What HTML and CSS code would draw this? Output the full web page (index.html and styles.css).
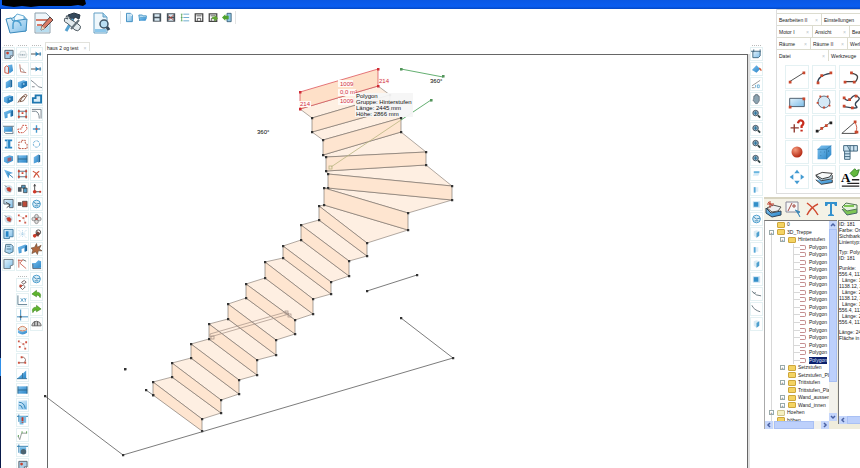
FILE: index.html
```html
<!DOCTYPE html>
<html lang="de">
<head>
<meta charset="utf-8">
<title>haus 2 og test</title>
<link rel="stylesheet" href="styles.css">
</head>
<body>
<svg class="defs" aria-hidden="true">
<defs>
<linearGradient id="g" x1="0" y1="0" x2="1" y2="1"><stop offset="0" stop-color="#7cc0ee"/><stop offset="1" stop-color="#2a86c8"/></linearGradient>
<linearGradient id="gl" x1="0" y1="0" x2="1" y2="1"><stop offset="0" stop-color="#e4f3fc"/><stop offset="1" stop-color="#7dbde8"/></linearGradient>
<radialGradient id="gr" cx=".35" cy=".3" r=".7"><stop offset="0" stop-color="#f59a7c"/><stop offset="1" stop-color="#b52a14"/></radialGradient>
<symbol id="plan" viewBox="0 0 12 12"><path d="M2 2h9v6l-3 3H2z" fill="#a9cde6" stroke="#56616c"/><path d="M8 11V8h3" fill="#fff" stroke="#56616c"/><circle cx="5" cy="5" r="1.5" fill="#c8402c"/></symbol>
<symbol id="door" viewBox="0 0 12 12"><path d="M5 2l5-1 1 7-4 3z" fill="url(#g)"/><path d="M2 10V4q2-3 4 0v7z" fill="#e8f2f8" stroke="#c8503c"/></symbol>
<symbol id="wall" viewBox="0 0 12 12"><path d="M3 4l5-3v8l-5 2z" fill="url(#g)"/><path d="M8 1l2 1v7l-2 1z" fill="#1d699f"/></symbol>
<symbol id="block" viewBox="0 0 12 12"><path d="M1 4l6-2 4 1v5l-6 3-4-2z" fill="url(#g)"/><path d="M5 5v6l6-3V3z" fill="#2478b4"/><path d="M6 6l2-1v2z" fill="#d4ecfa"/></symbol>
<symbol id="blockr" viewBox="0 0 12 12"><path d="M1 4l6-2 4 1v5l-6 3-4-2z" fill="url(#g)"/><path d="M5 5l4-1v4l-4 1z" fill="#9c5f71"/></symbol>
<symbol id="arch" viewBox="0 0 12 12"><path d="M1 4l8-3 2 1v6l-3 1V5L5 6v4l-3 1z" fill="url(#g)"/><path d="M9 3l2-1v6l-2 1z" fill="#1d699f"/></symbol>
<symbol id="slab" viewBox="0 0 12 12"><path d="M1 3h9v6H1z" fill="url(#g)"/><path d="M0 3h12M10 3l1 8H3L1 9" fill="none" stroke="#667b8b"/></symbol>
<symbol id="beam" viewBox="0 0 12 12"><path d="M2 1h8v2H8v6h2v2H2V9h2V3H2z" fill="#2884c4"/><path d="M5 2v8" stroke="#a5d7f4"/></symbol>
<symbol id="ptr" viewBox="0 0 12 12"><path d="M1 1l10 4-4 1-1 5-2-4z" fill="url(#g)"/><path d="M5 5l6 5" stroke="#357ba7"/></symbol>
<symbol id="hit" viewBox="0 0 12 12"><circle cx="6" cy="6" r="4.5" fill="#d3e3ee"/><path d="M2 2l2 2" stroke="#567"/><path d="M4 5l3-1 2 2-1 3-3-1z" fill="#cf3a29" stroke="#9a5550" stroke-width=".6"/></symbol>
<symbol id="corner" viewBox="0 0 12 12"><path d="M1 1h10v9H7V6H1z" fill="url(#gl)" stroke="#58636b"/><path d="M3 4l5 3-4 3" fill="none" stroke="#444"/></symbol>
<symbol id="layer" viewBox="0 0 12 12"><path d="M1 1h10v8H7v2H1z" fill="url(#gl)" stroke="#3e79a0"/><path d="M3 3h3v6H3z" fill="#2584c6"/></symbol>
<symbol id="frameb" viewBox="0 0 12 12"><path d="M2 3h8v5L8 10H2z" fill="url(#gl)" stroke="#3f6780"/><path d="M0 3h3M3 1v3M10 1v3" stroke="#3f6780"/></symbol>
<symbol id="copy" viewBox="0 0 12 12"><path d="M3 1h6l2 2v6l-4 2-5-2z" fill="url(#gl)" stroke="#487289"/><path d="M4 3h4M4 6h5" stroke="#487289"/></symbol>
<symbol id="shape" viewBox="0 0 12 12"><path d="M1 1h10v6L8 8v3H1z" fill="url(#gl)" stroke="#66747e"/></symbol>
<symbol id="tag" viewBox="0 0 12 12"><path d="M1 6h2l1-3h5l1 3h1l-1 4H2z" fill="#f4f7f8" stroke="#bcc9ce" stroke-width=".6"/><path d="M3 7h1M5 7h2M8 7h1" stroke="#8196a3" stroke-width="1.5"/></symbol>
<symbol id="angle" viewBox="0 0 12 12"><path d="M3 1l1 8 6 1" fill="none" stroke="#ba7163"/><path d="M3 5q4 0 5 5" fill="none" stroke="#a5a5a5"/></symbol>
<symbol id="clip" viewBox="0 0 12 12"><path d="M1 10l3-5 5-4 2 1-4 6-4 1 3-5 3-1" fill="none" stroke="#76523f"/></symbol>
<symbol id="frame" viewBox="0 0 12 12"><path d="M2 1v10M10 1v10M1 3h10M1 9h10" fill="none" stroke="#536b7b"/><path d="M1 2h2v2H1zM9 2h2v2H9zM1 8h2v2H1zM9 8h2v2H9zM5 4h2v2H5z" fill="#d24632"/></symbol>
<symbol id="loop" viewBox="0 0 12 12"><path d="M2 10L1 6l4 0 1-4h4l1 4-4 4z" fill="none" stroke="#c5412e" stroke-dasharray="2 1"/></symbol>
<symbol id="contour" viewBox="0 0 12 12"><path d="M2 11V4h3V2h4v3l2 1v5z" fill="none" stroke="#b3442f" stroke-dasharray="2 1"/></symbol>
<symbol id="grid" viewBox="0 0 12 12"><path d="M1 2h10v8H1z" fill="url(#g)"/><path d="M1 2v8M11 2v8M1 6h10" stroke="#296385"/></symbol>
<symbol id="film" viewBox="0 0 12 12"><path d="M1 4h4v5H1z" fill="#505b65"/><path d="M5 2h4v3H5zM7 5h4v5H7z" fill="#559dc7" stroke="#333" stroke-width=".7"/></symbol>
<symbol id="filmr" viewBox="0 0 12 12"><path d="M1 4h4v4H1z" fill="#555"/><path d="M6 3h5v6H6z" fill="#bc4a38" stroke="#333" stroke-width=".7"/></symbol>
<symbol id="dots" viewBox="0 0 12 12"><path d="M1 1h2v2H1zM9 2h2v2H9zM2 7h2v2H2zM6 4h2v2H6zM8 9h2v2H8z" fill="#cf5240"/><path d="M2 2l5 3 2 5" fill="none" stroke="#c3b0ac" stroke-width=".5"/></symbol>
<symbol id="pale" viewBox="0 0 12 12"><path d="M2 2l8 8M10 2L2 10M2 6h8M6 2v8" stroke="#a9cfe6" stroke-dasharray="1 1"/></symbol>
<symbol id="fan" viewBox="0 0 12 12"><path d="M1 2h5L3 5l7 6M2 1v9" fill="none" stroke="#cc6555"/><path d="M6 1l4 2" stroke="#666"/></symbol>
<symbol id="knot" viewBox="0 0 12 12"><path d="M5 3l3-2 2 2-3 2zM3 8l4-2 2 2-3 3z" fill="none" stroke="#6c5c5d"/><circle cx="4" cy="7" r="1.5" fill="#c44939"/></symbol>
<symbol id="xy" viewBox="0 0 12 12"><path d="M1 1v10h10" fill="none" stroke="#58788b"/><path d="M4 4l3 4M7 4L4 8M8 4l1 2 1-2M9 6v2" stroke="#3c8fbf" fill="none" stroke-width=".8"/></symbol>
<symbol id="axis" viewBox="0 0 12 12"><path d="M4 0v12M0 8h12" stroke="#2b82bb"/><path d="M3 7h2v2H3z" fill="#555"/></symbol>
<symbol id="bowl" viewBox="0 0 12 12"><path d="M1 6q5 3 10 0v3q-5 4-10 0z" fill="url(#g)"/><path d="M1 5q5-6 10 0-5 4-10 0" fill="#e9ebe8" stroke="#d07a54"/></symbol>
<symbol id="hook" viewBox="0 0 12 12"><path d="M2 9h6q3-4-1-6H5" fill="none" stroke="#8b6760"/><path d="M1 8h2v2H1zM4 2h2v2H4zM8 8h2v2H8z" fill="#d05340"/></symbol>
<symbol id="ramp" viewBox="0 0 12 12"><path d="M0 10L10 1v9z" fill="url(#g)"/><path d="M6 4v6M0 10h11" stroke="#35739b"/></symbol>
<symbol id="bowls" viewBox="0 0 12 12"><path d="M1 1h10v10H1z" fill="url(#gl)"/><path d="M2 3q6 0 7 7M2 6q3 0 4 4" fill="none" stroke="#287fb5"/></symbol>
<symbol id="mark" viewBox="0 0 12 12"><path d="M0 2h12M2 0v8" stroke="#277aad"/><path d="M2 2h8v7H7v2H3z" fill="#7abde4"/><path d="M6 3v4M6 8v1" stroke="#c53426" stroke-width="2"/></symbol>
<symbol id="step" viewBox="0 0 12 12"><path d="M1 7l2 4 2-7h6" fill="none" stroke="#8c9491"/><path d="M1 7h1M5 3h1M10 3h1" stroke="#57a050" stroke-width="2"/></symbol>
<symbol id="round" viewBox="0 0 12 12"><path d="M0 2h12M2 0v9" stroke="#277aad"/><path d="M3 3h7v7H3z" fill="#69b5e4"/><circle cx="7" cy="8" r="3" fill="#4d6471"/></symbol>
<symbol id="len" viewBox="0 0 12 12"><path d="M0 6h11" stroke="#444"/><path d="M5 4l3 2-3 2M10 4v4" fill="#2d83ba" stroke="#2d83ba"/></symbol>
<symbol id="curve" viewBox="0 0 12 12"><path d="M0 2l4 3 4 4 4 1M1 9h3" fill="none" stroke="#5a6570" stroke-width=".8"/></symbol>
<symbol id="room" viewBox="0 0 12 12"><path d="M2 10V5h3V2h6v8z" fill="#d7edf9" stroke="#1d77b0" stroke-width="2"/></symbol>
<symbol id="arc" viewBox="0 0 12 12"><path d="M1 3h4q4 1 4 8M1 1h10v10" fill="none" stroke="#6e7c85"/></symbol>
<symbol id="move" viewBox="0 0 12 12"><path d="M6 2v8M2 6h8" stroke="#459bce" stroke-width="1.5"/><path d="M5 5h2v2H5z" fill="#d14d3e"/></symbol>
<symbol id="circ" viewBox="0 0 12 12"><circle cx="6" cy="6" r="3.5" fill="none" stroke="#68acd4" stroke-dasharray="3 1"/></symbol>
<symbol id="cross" viewBox="0 0 12 12"><path d="M2 3q5 2 7 7M9 3Q5 5 3 10" fill="none" stroke="#ce5038" stroke-width="1.2"/></symbol>
<symbol id="orig" viewBox="0 0 12 12"><path d="M4 1v8h7M4 1L3 3M4 1l1 2" fill="none" stroke="#444"/><circle cx="4" cy="9" r="2" fill="#cf3a2a"/><path d="M9 8h2v2H9z" fill="#cf3a2a"/></symbol>
<symbol id="dial" viewBox="0 0 12 12"><circle cx="6" cy="6" r="4.2" fill="#d9edf8" stroke="#439aca"/><path d="M3 4l3 2 4-1M4 8h4" fill="none" stroke="#3e88b4"/></symbol>
<symbol id="flower" viewBox="0 0 12 12"><circle cx="6" cy="3" r="2" fill="#ddd" stroke="#777" stroke-width=".8"/><circle cx="3" cy="6" r="2" fill="#ddd" stroke="#777" stroke-width=".8"/><circle cx="9" cy="6" r="2" fill="#ddd" stroke="#777" stroke-width=".8"/><circle cx="6" cy="9" r="2" fill="#ddd" stroke="#777" stroke-width=".8"/><circle cx="6" cy="6" r="1.2" fill="#c64838"/></symbol>
<symbol id="fox" viewBox="0 0 12 12"><path d="M4 7l3-4 3 2-2 4z" fill="#7e4138"/><circle cx="8" cy="4" r="2.5" fill="none" stroke="#444"/><circle cx="4" cy="8" r="2" fill="#cc3b29"/></symbol>
<symbol id="star" viewBox="0 0 12 12"><path d="M6 0l1 4 4-2-2 4 3 2-4 0-1 4-2-3-4 2 1-4-2-2 4-1z" fill="#ae673e" stroke="#58402c" stroke-width=".6"/></symbol>
<symbol id="terr" viewBox="0 0 12 12"><path d="M1 5l4 0 3-3 3 1v7L2 11z" fill="url(#g)"/><path d="M2 6v5h9" stroke="#567" fill="none"/></symbol>
<symbol id="undo" viewBox="0 0 12 12"><path d="M1 6l5-4v2q6 0 4 6-1-3-4-3v2z" fill="#5eb52d" stroke="#39831d" stroke-width=".6"/></symbol>
<symbol id="redo" viewBox="0 0 12 12"><path d="M11 6L6 2v2Q0 4 2 10q1-3 4-3v2z" fill="#5eb52d" stroke="#39831d" stroke-width=".6"/></symbol>
<symbol id="car" viewBox="0 0 12 12"><path d="M1 7q1-4 5-4t5 4v1H1z" fill="#ccc" stroke="#666"/><path d="M4 3v5M7 3v5" stroke="#555"/></symbol>
<symbol id="zoomi" viewBox="0 0 12 12"><circle cx="5" cy="5" r="3" fill="#98b3c3" stroke="#44525f"/><path d="M7.500 7.500L10 10" stroke="#344" stroke-width="2"/><path d="M3 5h4M5 3v4" stroke="#23719d"/></symbol>
<symbol id="hand" viewBox="0 0 12 12"><path d="M3 6V3h1V2h1V1h2v1h1v1h1v5l-2 3H5L2 7z" fill="#8aa3b1" stroke="#4b5a65" stroke-width=".7"/></symbol>
<symbol id="fill" viewBox="0 0 12 12"><path d="M1 7l5-5 4 4-4 4z" fill="url(#g)"/><path d="M9 5q2 1 2 3" stroke="#d15a34" fill="none" stroke-width="1.5"/></symbol>
<symbol id="meas" viewBox="0 0 12 12"><path d="M1 8L10 2M1 10h3" stroke="#777" stroke-width=".8"/><path d="M5 7v3M7 7h2v3H7z" fill="none" stroke="#4b9dca" stroke-width=".8"/></symbol>
<symbol id="view" viewBox="0 0 12 12"><path d="M4 3h6L8 8H2z" fill="#d3eaf7"/><path d="M3 3h6v2H3z" fill="#69b5de"/></symbol>
<symbol id="viewl" viewBox="0 0 12 12"><path d="M3 4h5v5H3z" fill="#ddeef8"/><path d="M3 4h2v6H3z" fill="#58a9d8"/></symbol>
<symbol id="viewf" viewBox="0 0 12 12"><path d="M2 3h8v7H2z" fill="#c5e2f3"/><path d="M3 4h5v5H3z" fill="#338fc8"/></symbol>
<symbol id="viewc" viewBox="0 0 12 12"><path d="M3 3l3-1 3 1v5l-3 2-3-2z" fill="#d9ebf4"/><path d="M6 5l3-2v5l-3 2z" fill="#4d9fcd"/></symbol>
<symbol id="wave" viewBox="0 0 12 12"><path d="M1 3l5 4 5 1M3 6l2-2" stroke="#65747c" fill="none"/></symbol>
<symbol id="path" viewBox="0 0 12 12"><path d="M1 2q2 5 9 7" stroke="#65747c" fill="none"/></symbol>
<symbol id="page" viewBox="0 0 12 12"><path d="M3 1h5l2 2v8H3z" fill="url(#gl)" stroke="#2f83b9"/><path d="M8 1v3h2" fill="#fff"/></symbol>
<symbol id="open" viewBox="0 0 12 12"><path d="M1 3h4l1 1h4v2H3l-1 4z" fill="#b5dcf3" stroke="#398dbf"/><path d="M3 6h8l-2 4H2z" fill="url(#g)"/></symbol>
<symbol id="disk" viewBox="0 0 12 12"><path d="M1 1h10v10H1z" fill="#47525b"/><path d="M3 2h6v3H3zM3 7h6v3H3z" fill="#d8e9f3"/></symbol>
<symbol id="diskr" viewBox="0 0 12 12"><use href="#disk"/><path d="M3 4l6 5M9 3L3 9" stroke="#ba4031"/></symbol>
<symbol id="list" viewBox="0 0 12 12"><path d="M4 2h7M4 6h7M4 10h7" stroke="#559ec6"/><path d="M1 2h2M1 6h2M1 10h2M2 2v8" stroke="#59a559"/></symbol>
<symbol id="diskw" viewBox="0 0 12 12"><path d="M1.500 1.500h9v9h-9z" fill="#fff" stroke="#444" stroke-width="1.5"/><path d="M3 4h6M4 10V7h4v3" fill="none" stroke="#444"/></symbol>
<symbol id="diskg" viewBox="0 0 12 12"><use href="#diskw"/><path d="M5 5h3V3l4 4-4 4V8H5z" fill="#61a634"/></symbol>
<symbol id="exit" viewBox="0 0 12 12"><path d="M6 1h5v10H6z" fill="#8ec5e2" stroke="#355a73"/><path d="M0 6l4-4v2h4v4H4v2z" fill="#4ea22d"/></symbol>
</defs>
</svg>

<header class="titlebar"><svg class="scribble" viewBox="0 0 86 7" aria-hidden="true"><path d="M2 0h83l1 4-3 2-5-1-7 1H39l-8 1-9-1-8 1-8-1-4-1z"/></svg></header>

<div class="window">
<main class="main">
<nav class="topbar" aria-label="Standard">
<div class="big">
<button aria-label="Öffnen"><svg viewBox="0 0 24 24"><path d="M2 8l6-1 2-2 10 1 1 14H5z" fill="#d4ecfa" stroke="#4c96c2"/><path d="M9 7l3-4 7 2v10l-8 1z" fill="#f3fbff" stroke="#6cafd6"/><path d="M1 8l5-1 2 3 14-2-1 12-16 2z" fill="url(#gl)" stroke="#3b8abc"/><path d="M8 18v-4q0-5 4-4t4 5" fill="none" stroke="#4c9fd0" stroke-width="1.500"/></svg></button>
<button aria-label="Bearbeiten"><svg viewBox="0 0 24 24"><path d="M2 2h11l4 4v16H2z" fill="#eef6fa" stroke="#8ba0ad"/><path d="M3 15h13v6H3z" fill="#b9ddef"/><path d="M3 9h13M4 14h5" stroke="#d77b69" stroke-width="2"/><path d="M8 19l1-4L17 6l3 3-9 9z" fill="#d87b65" stroke="#554344"/><path d="M8 19l1-4 3 3z" fill="#e9d6bd"/></svg></button>
<button aria-label="Werkzeug"><svg viewBox="0 0 24 24"><path d="M7 4l6-2 6 2-1 4-4-2-2 3-2-2-3 1z" fill="#34485b" stroke="#273542"/><path d="M12 8L5 20" stroke="#57a2d0" stroke-width="3"/><path d="M4 7q-2 4 2 5l8 7q3 2 5-1t-2-5L9 8Q8 4 5 5l2 3z" fill="#e4ebee" stroke="#4c5860"/><path d="M18 9l-8 9" stroke="#65727a" stroke-width="2"/></svg></button>
<button aria-label="Vorschau"><svg viewBox="0 0 24 24"><path d="M5 2h9l4 4v16H5z" fill="#eef7fc" stroke="#639fc4"/><path d="M6 18h11v3H6z" fill="#8cc7eb"/><path d="M14 2v4h4" fill="#a9d6ef" stroke="#639fc4"/><circle cx="15" cy="13" r="4" fill="#b9def3" stroke="#3f5668" stroke-width="1.500"/><path d="M18 16l2 3" stroke="#34485b" stroke-width="3"/></svg></button>
</div>
<div class="small">
<button aria-label="Neu"><svg><use href="#page"/></svg></button><button aria-label="Laden"><svg><use href="#open"/></svg></button><button aria-label="Speichern"><svg><use href="#disk"/></svg></button><button aria-label="Verwerfen"><svg><use href="#diskr"/></svg></button><button aria-label="Liste"><svg><use href="#list"/></svg></button><button aria-label="Speichern unter"><svg><use href="#diskw"/></svg></button><button aria-label="Export"><svg><use href="#diskg"/></svg></button><button aria-label="Beenden"><svg><use href="#exit"/></svg></button>
</div>
</nav>

<div class="work">
<div class="tools" role="toolbar" aria-label="Bauteile">
<div class="col grip">
<button aria-label="Plan"><svg><use href="#plan"/></svg></button><button aria-label="Tür"><svg><use href="#door"/></svg></button><button aria-label="Wand"><svg><use href="#wall"/></svg></button><button aria-label="Block"><svg><use href="#block"/></svg></button><button aria-label="Bogen"><svg><use href="#arch"/></svg></button><button aria-label="Decke"><svg><use href="#slab"/></svg></button><button aria-label="Träger"><svg><use href="#beam"/></svg></button><button aria-label="Aussparung"><svg><use href="#blockr"/></svg></button><button aria-label="Auswahl"><svg><use href="#ptr"/></svg></button><button aria-label="Treffer"><svg><use href="#hit"/></svg></button><button aria-label="Ecke"><svg><use href="#corner"/></svg></button><button aria-label="Punkt"><svg><use href="#hit"/></svg></button><button aria-label="Ebene"><svg><use href="#layer"/></svg></button><button aria-label="Kopie"><svg><use href="#copy"/></svg></button><button aria-label="Form"><svg><use href="#shape"/></svg></button>
</div>
<div class="col grip">
<button aria-label="Etikett"><svg><use href="#tag"/></svg></button><button aria-label="Winkel"><svg><use href="#angle"/></svg></button><button aria-label="Körper"><svg><use href="#block"/></svg></button><button aria-label="Stift"><svg><use href="#clip"/></svg></button><button aria-label="Rahmen"><svg><use href="#frame"/></svg></button><button aria-label="Schleife"><svg><use href="#loop"/></svg></button><button aria-label="Kontur"><svg><use href="#contour"/></svg></button><button aria-label="Fläche"><svg><use href="#grid"/></svg></button><button aria-label="Raster"><svg><use href="#frame"/></svg></button><button aria-label="Gruppe"><svg><use href="#film"/></svg></button><button aria-label="Gruppe lösen"><svg><use href="#filmr"/></svg></button><button aria-label="Punkte"><svg><use href="#dots"/></svg></button><button aria-label="Netz"><svg><use href="#pale"/></svg></button><button aria-label="Dach"><svg><use href="#arch"/></svg></button><button aria-label="Fächer"><svg><use href="#fan"/></svg></button>
<div class="col grip">
<button aria-label="Knoten"><svg><use href="#knot"/></svg></button><button aria-label="Koordinaten"><svg><use href="#xy"/></svg></button><button aria-label="Achse"><svg><use href="#axis"/></svg></button><button aria-label="Schale"><svg><use href="#bowl"/></svg></button><button aria-label="Punktfolge"><svg><use href="#dots"/></svg></button><button aria-label="Haken"><svg><use href="#hook"/></svg></button><button aria-label="Rampe"><svg><use href="#ramp"/></svg></button><button aria-label="Breite"><svg><use href="#grid"/></svg></button><button aria-label="Radius"><svg><use href="#bowls"/></svg></button><button aria-label="Marke"><svg><use href="#mark"/></svg></button><button aria-label="Stufe"><svg><use href="#step"/></svg></button><button aria-label="Rund"><svg><use href="#round"/></svg></button><button aria-label="Blatt"><svg><use href="#plan"/></svg></button>
</div>
</div>
<div class="col grip">
<button aria-label="Verlängern"><svg><use href="#len"/></svg></button><button aria-label="Kürzen"><svg><use href="#len"/></svg></button><button aria-label="Kurve"><svg><use href="#curve"/></svg></button><button aria-label="Raum"><svg><use href="#room"/></svg></button><button aria-label="Abrunden"><svg><use href="#arc"/></svg></button><button aria-label="Verschieben"><svg><use href="#move"/></svg></button><button aria-label="Drehen"><svg><use href="#circ"/></svg></button><button aria-label="Quader"><svg><use href="#wall"/></svg></button><button aria-label="Löschen"><svg><use href="#cross"/></svg></button><button aria-label="Ursprung"><svg><use href="#orig"/></svg></button><button aria-label="Skala"><svg><use href="#dial"/></svg></button><button aria-label="Muster"><svg><use href="#flower"/></svg></button><button aria-label="Material"><svg><use href="#fox"/></svg></button><button aria-label="Explosion"><svg><use href="#star"/></svg></button><button aria-label="Gelände"><svg><use href="#terr"/></svg></button><button aria-label="Kompass"><svg><use href="#dial"/></svg></button><button aria-label="Rückgängig"><svg><use href="#undo"/></svg></button><button aria-label="Wiederholen"><svg><use href="#redo"/></svg></button><button aria-label="Objekt"><svg><use href="#car"/></svg></button>
</div>
</div>

<section class="doc">
<div class="doctab"><span>haus 2 og test</span><i>×</i></div>
<div class="canvas">
<svg class="drawing" viewBox="48 55 698 413" role="img" aria-label="Treppe">
<defs>
<marker id="k" markerWidth="3" markerHeight="3" refX="1.500" refY="1.500" markerUnits="userSpaceOnUse"><rect x=".25" y=".25" width="2.500" height="2.500" fill="#333"/></marker>
<marker id="r" markerWidth="3" markerHeight="3" refX="1.500" refY="1.500" markerUnits="userSpaceOnUse"><rect width="3" height="3" fill="#d02c34"/></marker>
<marker id="gn" markerWidth="3" markerHeight="3" refX="1.500" refY="1.500" markerUnits="userSpaceOnUse"><rect x=".5" y=".5" width="2" height="2" fill="#9c9" stroke="#3c8346"/></marker>
</defs>
<g class="tread">
<path d="M300 109L378 86L390 95L312 118Z"/><path d="M312 132L390 110L401 118L323 140Z"/><path d="M323 155L401 132L426 152L326 157Z"/><path d="M326 171L426 165L452 186L328 174Z"/><path d="M328 188L452 200L408 213L324 188Z"/><path d="M324 205L408 230L367 243L319 206Z"/>
<path d="M319 220L367 256L349 261L301 225Z"/><path d="M301 240L349 276L331 282L283 246Z"/><path d="M283 258L331 294L313 299L265 262Z"/><path d="M265 278L313 314L295 320L246 284Z"/><path d="M246 298L295 334L276 340L228 304Z"/><path d="M228 319L276 355L257 360L209 324Z"/><path d="M209 339L257 375L239 380L191 344Z"/><path d="M191 358L239 394L221 400L172 363Z"/><path d="M172 377L221 413L202 419L153 382Z"/>
</g>
<g class="riser">
<path d="M312 118V132L390 110V95Z"/><path d="M323 140V155L401 132V118Z"/><path d="M326 157V171L426 165V152Z"/><path d="M328 174V188L452 200V186Z"/><path d="M324 188V205L408 230V213Z"/><path d="M319 206V220L367 256V243Z"/><path d="M301 225V240L349 276V261Z"/><path d="M283 246V258L331 294V282Z"/><path d="M265 262V278L313 314V299Z"/><path d="M246 284V298L295 334V320Z"/><path d="M228 304V319L276 355V340Z"/><path d="M209 324V339L257 375V360Z"/><path d="M191 344V358L239 394V380Z"/><path d="M172 363V377L221 413V400Z"/><path d="M153 382V395L202 431V419Z"/>
</g>
<path class="selected" d="M300 92V109L378 86V69Z"/>
<g class="line"><path d="M45 396L123 455L453 358L401 318"/><path d="M367 291L417 275"/><path d="M146 390L153 395"/><path d="M125 369h.1"/></g>
<g class="rail"><path d="M210 337L289 314M210 334L286 312M210 334V337M286 312L289 314"/><rect x="285" y="311" width="3" height="3"/><rect x="288" y="314" width="3" height="3"/><rect x="211" y="336" width="3" height="3"/></g>
<path class="green" d="M401 69L443 77"/><path class="green" d="M431 100L401 120"/><path class="olive" d="M401 120L331 167"/><rect class="olive" x="329" y="166" width="3" height="3"/><path class="greenend" d="M443 76h.1"/>
<g class="tags"><rect x="338" y="80" width="15" height="7"/><rect x="338" y="89" width="18" height="7"/><rect x="338" y="98" width="15" height="7"/><rect x="299" y="101" width="12" height="6"/><rect x="379" y="78" width="10" height="6"/></g>
<g class="dims"><text x="340" y="86">1009</text><text x="340" y="94">0,0 m²</text><text x="340" y="103">1009</text><text x="300" y="106">214</text><text x="379" y="83">214</text></g>
<g class="deg"><text x="257" y="134">360°</text><text x="430" y="83">360°</text></g>
</svg>
<div class="tooltip" role="tooltip">Polygon<br>Gruppe: Hinterstufen<br>Länge: 2445 mm<br>Höhe: 2866 mm</div>
</div>
</section>

<div class="col grip views" role="toolbar" aria-label="Ansicht">
<button aria-label="Fenster"><svg><use href="#frameb"/></svg></button><button aria-label="Füllen"><svg><use href="#fill"/></svg></button><button aria-label="Messen"><svg><use href="#meas"/></svg></button><button aria-label="Schieben"><svg><use href="#hand"/></svg></button><button aria-label="Zoom +"><svg><use href="#zoomi"/></svg></button><button aria-label="Zoom −"><svg><use href="#zoomi"/></svg></button><button aria-label="Zoom alles"><svg><use href="#zoomi"/></svg></button><button aria-label="Zoom Fenster"><svg><use href="#zoomi"/></svg></button><button aria-label="Oben"><svg><use href="#view"/></svg></button><button aria-label="Links"><svg><use href="#viewl"/></svg></button><button aria-label="Vorne"><svg><use href="#viewf"/></svg></button><button aria-label="Orbit"><svg><use href="#dial"/></svg></button><button aria-label="Iso 1"><svg><use href="#viewc"/></svg></button><button aria-label="Iso 2"><svg><use href="#viewl"/></svg></button><button aria-label="Iso 3"><svg><use href="#viewc"/></svg></button><button aria-label="Iso 4"><svg><use href="#viewf"/></svg></button><button aria-label="Schnitt"><svg><use href="#wave"/></svg></button><button aria-label="Pfad"><svg><use href="#path"/></svg></button><button aria-label="Licht"><svg><use href="#viewc"/></svg></button>
</div>
</div>
</main>

<aside class="side">
<section class="toolbox">
<div class="tabs">
<div class="tabrow"><a href="#b2">Bearbeiten II<i>×</i></a><a href="#ei">Einstellungen</a></div>
<div class="tabrow"><a href="#m1">Motor I<i>×</i></a><a href="#an">Ansicht<i>×</i></a><a href="#be">Bea</a></div>
<div class="tabrow"><a href="#ra">Räume<i>×</i></a><a href="#r2">Räume II<i>×</i></a><a href="#we">Werl</a></div>
<div class="tabrow"><a href="#da">Datei<i>×</i></a><a href="#wz" class="on">Werkzeuge</a></div>
</div>
<div class="palette">
<button aria-label="Linie"><svg viewBox="0 0 24 24"><path d="M4 17L20 7" stroke="#444"/><path class="pt" d="M3 16h3v3H3zM18 6h3v3h-3z"/></svg></button>
<button aria-label="Bogen"><svg viewBox="0 0 24 24"><path d="M5 19q0-9 14-11" fill="none" stroke="#345" stroke-width="1.500"/><path class="pt" d="M4 17h3v3H4zM8 9h3v3H8zM18 6h3v3h-3z"/></svg></button>
<button aria-label="Polylinie"><svg viewBox="0 0 24 24"><path d="M5 17h12q6-8-5-9" fill="none" stroke="#444" stroke-width="1.500"/><path class="pt" d="M4 16h3v3H4zM14 16h3v3h-3zM11 6h3v3h-3z"/></svg></button>
<button aria-label="Rechteck"><svg viewBox="0 0 24 24"><path d="M4 8h16v9H4z" fill="url(#gl)" stroke="#456"/><path class="pt" d="M3 16h3v3H3zM18 7h3v3h-3z"/></svg></button>
<button aria-label="Kreis"><svg viewBox="0 0 24 24"><circle cx="12" cy="12" r="6.500" fill="#d5e9f6" stroke="#567"/><path class="pt" d="M7 5h2v2H7zM15 5h2v2h-2zM4 12h2v2H4zM17 15h2v2h-2zM11 17h2v2h-2z"/></svg></button>
<button aria-label="Spline"><svg viewBox="0 0 24 24"><path d="M4 7q4 6 8 1t7-2q4 2 0 5t-1 6-14 0" fill="none" stroke="#345" stroke-width="1.500"/><path class="pt" d="M3 6h3v3H3zM9 8h3v3H9zM16 4h3v3h-3zM3 15h3v3H3zM12 17h3v3h-3z"/></svg></button>
<button aria-label="Punkt setzen"><svg viewBox="0 0 24 24"><path d="M5 13h9M9 9v9" stroke="#8f3a30" stroke-width="1.500"/><path d="M13 8q1-4 4-3 4 2 0 6v2M17 15v2" fill="none" stroke="#c72d1e" stroke-width="2.500"/></svg></button>
<button aria-label="Teilen"><svg viewBox="0 0 24 24"><path d="M5 17L19 7" stroke="#555"/><path d="M3 15h3v3H3zM18 6h3v3h-3z" fill="#222"/><path class="pt" d="M8 12h3v3H8zM13 9h3v3h-3z"/></svg></button>
<button aria-label="Winkelmaß"><svg viewBox="0 0 24 24"><path d="M2 19h16M2 19L17 6" fill="none" stroke="#444"/><path d="M16 7q4 5 1 11" fill="none" stroke="#c8513a"/><path class="pt" d="M15 5h3v3h-3zM16 16h4v3h-4z"/></svg></button>
<button aria-label="Kugel"><svg viewBox="0 0 24 24"><circle cx="12" cy="12" r="6" fill="url(#gr)"/></svg></button>
<button aria-label="Würfel"><svg viewBox="0 0 24 24"><path d="M5 9l4-4h11v10l-5 5H5z" fill="url(#g)"/><path d="M5 9h10v11M15 9l5-4M8 12h1M12 12h1M8 16h1M17 10v2" fill="none" stroke="#276b99" stroke-width=".7"/></svg></button>
<button aria-label="Treppe"><svg viewBox="0 0 24 24"><path d="M4 5h15v6h-8v9H5v-9H4z" fill="#cbe3f1" stroke="#3c617a"/><path d="M11 5v6M15 5v6M8 5l3 6M5 11h6M5 14h6M5 17h6" stroke="#3c617a"/></svg></button>
<button aria-label="Bewegen"><svg viewBox="0 0 24 24"><path d="M12 4l3 4H9zM12 20l3-4H9zM4 12l4-3v6zM20 12l-4-3v6z" fill="#439bd2"/></svg></button>
<button aria-label="Ebenen"><svg viewBox="0 0 24 24"><path d="M3 15l6 5 12-2v-3" fill="url(#g)" stroke="#333"/><path d="M3 11l6 5 12-2v-4" fill="#bcd4e1" stroke="#333"/><path d="M3 10l7-3 11 1-3 4-8 2z" fill="#f7f9f9" stroke="#333"/></svg></button>
<button aria-label="Text"><svg viewBox="0 0 24 24"><text x="1" y="17" class="glyph">A</text><path d="M11 8l5-5 2 2 3-1-2 6-4 2z" fill="#63b93e" stroke="#36812b"/><path d="M13 15h8M8 19h13M2 22h19" stroke="#222" stroke-width="1.500"/></svg></button>
</div>
</section>

<section class="browser">
<div class="layerbar">
<button aria-label="Ebene neu"><svg viewBox="0 0 18 18"><path d="M1 8l5 5 10-2v4l-9 2-6-4z" fill="url(#g)" stroke="#345"/><path d="M2 8l6-3 8 2-3 4-6 1z" fill="#eee" stroke="#555"/><path d="M2 4h7M5 1v7M3 2l5 4" stroke="#bf3f2e"/></svg></button>
<button aria-label="Ebene wählen"><svg viewBox="0 0 18 18"><path d="M2 2h12v10H2z" fill="#f6f7f7" stroke="#889"/><path d="M4 11L8 3M8 6h4M10 4v4" stroke="#a54a43"/><path d="M11 10l5 2-2 1 2 4" fill="#3a87b6" stroke="#3a87b6"/></svg></button>
<button aria-label="Entfernen"><svg viewBox="0 0 18 18"><path d="M4 3q7 5 11 12M15 4Q8 7 4 15" fill="none" stroke="#d04a30" stroke-width="1.500"/></svg></button>
<button aria-label="Schrift"><svg viewBox="0 0 18 18"><path d="M3 2h12v4h-2l-1-2h-2v10l2 1v1H6v-1l2-1V4H6L5 6H3z" fill="#3391cd"/></svg></button>
<button aria-label="Ebene grün"><svg viewBox="0 0 18 18"><path d="M1 9l5 6 10-2V9" fill="#7fc655" stroke="#466"/><path d="M1 7l5 4 10-2V5L5 3z" fill="#e4f2dc" stroke="#575"/><path d="M3 6l10 0" stroke="#7fc655" stroke-width="2"/></svg></button>
</div>
<div class="panes">
<div class="treepane">
<div class="treeview">
<ul class="tree">
<li class="l1"><b></b>0</li><li class="l1 x"><b></b>3D_Treppe</li><li class="l2 x"><b></b>Hinterstufen</li>
<li class="l3"><b></b><span>Polygon</span></li><li class="l3"><b></b><span>Polygon</span></li><li class="l3"><b></b><span>Polygon</span></li><li class="l3"><b></b><span>Polygon</span></li><li class="l3"><b></b><span>Polygon</span></li><li class="l3"><b></b><span>Polygon</span></li><li class="l3"><b></b><span>Polygon</span></li><li class="l3"><b></b><span>Polygon</span></li><li class="l3"><b></b><span>Polygon</span></li><li class="l3"><b></b><span>Polygon</span></li><li class="l3"><b></b><span>Polygon</span></li><li class="l3"><b></b><span>Polygon</span></li><li class="l3"><b></b><span>Polygon</span></li><li class="l3"><b></b><span>Polygon</span></li><li class="l3"><b></b><span>Polygon</span></li><li class="l3 sel"><b></b><span>Polygon</span></li>
<li class="l2 x"><b></b>Setzstufen</li><li class="l2"><b></b>Setzstufen_Pla</li><li class="l2 x"><b></b>Trittstufen</li><li class="l2"><b></b>Trittstufen_Plan</li><li class="l2 x"><b></b>Wand_aussen</li><li class="l2 x"><b></b>Wand_innen</li><li class="l1 x pale"><b></b>Hoehen</li><li class="l1"><b></b>höhen</li>
</ul>
<div class="vscroll"><button aria-label="Nach oben"><svg viewBox="0 0 8 8"><path d="M2 5l2-2 2 2"/></svg></button><i></i><button aria-label="Nach unten"><svg viewBox="0 0 8 8"><path d="M2 3l2 2 2-2"/></svg></button></div>
</div>
<div class="hscroll"><button aria-label="Nach links"><svg viewBox="0 0 8 8"><path d="M5 2L3 4l2 2"/></svg></button><i></i><button aria-label="Nach rechts"><svg viewBox="0 0 8 8"><path d="M3 2l2 2-2 2"/></svg></button></div>
</div>
<div class="infopane">
<div class="info"><p>ID: 181</p><p>Farbe: Ord</p><p>Sichtbarke</p><p>Linientyp: <em>■</em></p><p></p><p>Typ: Polyg</p><p>ID: 181</p><p></p><p>Punkte:</p><p>556.4, 112</p><p class="in">Länge: 10</p><p>1138.12, 2</p><p class="in">Länge: 21</p><p>1138.12, 2</p><p class="in">Länge: 10</p><p>556.4, 112</p><p class="in">Länge: 21</p><p>556.4, 112</p><p></p><p>Länge: 244</p><p>Fläche in E</p></div>
<div class="hscroll"><button aria-label="Text nach links"><svg viewBox="0 0 8 8"><path d="M5 2L3 4l2 2"/></svg></button><i></i></div>
</div>
</div>
</section>
</aside>
</div>
</body>
</html>
```
FILE: styles.css
```css
*, *::before { box-sizing: border-box; }
body {
  margin: 0;
  height: 100vh;
  overflow: hidden;
  display: flex;
  flex-direction: column;
  background: #fff;
  color: #222;
  font: 5px/6px "Liberation Sans", Arial, sans-serif;
}
.defs { position: absolute; width: 0; height: 0; }
button { border: 0; padding: 0; margin: 0; background: none; display: block; }
button svg { display: block; width: 100%; height: 100%; }
a { color: inherit; text-decoration: none; }
i { font-style: normal; }

.titlebar {
  flex: none;
  height: 9px;
  background: linear-gradient(#0a58e4, #0a5df0 70%, #0448c4);
}
.scribble { display: block; width: 86px; height: 7px; }

.window {
  flex: 1;
  min-height: 0;
  display: flex;
  padding-left: 1px;
  background: linear-gradient(#081848 76%, #2f8fe8 76% 80%, #081848 80%) 0 0 / 1px 100% no-repeat;
}
.main { flex: 1; min-width: 0; display: flex; flex-direction: column; }

.topbar { flex: none; height: 33px; display: flex; align-items: flex-start; }
.big { display: flex; gap: 4px; padding: 2px 0 0 4px; }
.big button { width: 24px; height: 24px; }
.small {
  display: flex;
  gap: 2px;
  margin: 2px 0 0 7px;
  padding: 0 2px;
  border-left: 1px solid #e4e4e4;
  border-right: 1px solid #e4e4e4;
}
.small button { width: 12px; height: 13px; padding: 1px; }

.work { flex: 1; min-height: 0; display: flex; }
.tools { flex: none; display: flex; padding-left: 1px; }
.col { flex: none; width: 14px; display: flex; flex-direction: column; gap: 1px; }
.col .col { margin-top: 1px; }
.col > button { flex: none; width: 13px; height: 14px; border: 1px solid #e4f1f3; }
.grip::before {
  content: "";
  flex: none;
  width: 9px;
  height: 1px;
  margin: 3px 2px 0;
  background: repeating-linear-gradient(90deg, #bbb 0 1px, #fff 1px 2px);
}
.views { width: 14px; margin-left: 2px; }

.doc { flex: 1; min-width: 0; display: flex; flex-direction: column; padding-left: 1px; }
.doctab {
  flex: none;
  align-self: flex-start;
  display: flex;
  gap: 5px;
  height: 9px;
  padding: 0 3px 0 1px;
  line-height: 10px;
  border: 1px solid #e2e2dc;
  border-width: 1px 1px 0;
}
.doctab i, .tabrow i { color: #b8c4c8; }
.canvas {
  flex: 1;
  min-height: 0;
  position: relative;
  margin: 3px 0 0 2px;
  border: 1px solid #666;
  border-bottom: 0;
  box-shadow: 2px 0 0 #e0e0e0;
}
.drawing { position: absolute; left: 0; top: 0; width: 698px; height: 413px; overflow: visible; }
.tread path { fill: #feefe2; stroke: #7c726a; stroke-width: .6; }
.riser path { fill: #fee5d0; stroke: #6d645e; stroke-width: .6; marker-start: url(#k); marker-mid: url(#k); }
.selected { fill: #fee0c8; stroke: #d8404a; stroke-width: .7; marker-start: url(#r); marker-mid: url(#r); }
.line path { fill: none; stroke: #444; stroke-width: .7; marker-start: url(#k); marker-mid: url(#k); marker-end: url(#k); }
.rail { fill: none; stroke: #a48f84; stroke-width: .7; }
.green { stroke: #3c9a4c; stroke-width: .8; marker-start: url(#gn); }
.greenend { marker-start: url(#gn); }
.olive { fill: none; stroke: #b9b580; stroke-width: .8; }
.tags { fill: #fffaf6; }
.dims { fill: #d02c44; }
.dims, .deg { font-size: 6px; }
.tooltip {
  position: absolute;
  left: 307px;
  top: 38px;
  padding: 0 1px;
  background: rgba(246, 246, 246, .95);
  color: #111;
  font-size: 6px;
}

.side { flex: none; width: 96px; overflow: hidden; }
.toolbox { margin-left: 12px; border-left: 1px solid #ddd; border-bottom: 1px solid #ddd; }
.tabs { width: 120px; padding-top: 3px; border-top: 1px solid #ccc; }
.tabrow { display: flex; height: 12px; border-top: 1px solid #dcdccf; line-height: 12px; }
.tabrow a { display: flex; justify-content: space-between; padding: 0 3px 0 2px; border-right: 1px solid #dcdccf; }
.tabrow a:last-child { border-right: 0; }
.tabrow a:first-child { width: 45px; }
.tabrow:nth-child(2) a:first-child { width: 36px; }
.tabrow:nth-child(2) a:nth-child(2) { width: 37px; }
.tabrow:nth-child(3) a:first-child { width: 34px; }
.tabrow:nth-child(3) a:nth-child(2) { width: 37px; }
.tabrow:nth-child(4) a:first-child { width: 52px; }
.palette {
  display: grid;
  grid-template-columns: repeat(3, 24px);
  grid-auto-rows: 24px;
  gap: 1px 3px;
  padding: 4px 0 4px 8px;
}
.palette button { border: 1px solid #e4f1f3; }
.pt { fill: #c9482e; }
.glyph { font: bold 14px "Liberation Serif", serif; }

.browser { margin-top: 3px; border-top: 2px solid #d8d4c0; }
.layerbar { display: flex; gap: 1px; height: 21px; padding: 1px 0 1px 1px; background: #f4f2e6; width: 120px; }
.layerbar button { width: 18px; height: 18px; }
.panes { display: flex; width: 140px; background: #efecdc; }
.treepane { flex: none; width: 73px; border-left: 1px solid #aaa; border-top: 1px solid #777; }
.treeview { display: flex; height: 200px; background: #fff; overflow: hidden; }
.tree {
  flex: 1;
  min-width: 0;
  height: 203px;
  margin: 0;
  padding: 0;
  overflow: hidden;
  list-style: none;
  display: grid;
  grid-auto-rows: 1fr;
  background: linear-gradient(#d8d8d8, #d8d8d8) 6px 10px / 1px 190px no-repeat;
}
.tree li { display: flex; align-items: center; white-space: nowrap; line-height: 7px; }
.tree b { flex: none; width: 8px; height: 6px; margin-right: 2px; background: #f4d362; border: 1px solid #cda63c; border-radius: 1px; }
.tree .pale b { background: #f5efc0; border-color: #cfc48c; }
.l1 { padding-left: 12px; }
.l2 { padding-left: 23px; }
.l3 { padding-left: 28px; }
.tree .x::before {
  content: "+";
  flex: none;
  width: 5px;
  height: 5px;
  border: 1px solid #9aa;
  background: #fff;
  font-size: 4px;
  line-height: 3px;
  text-align: center;
  margin-right: 3px;
}
.tree .l1.x { padding-left: 4px; }
.tree .l2.x { padding-left: 15px; }
.tree .l3::before { content: ""; flex: none; align-self: stretch; width: 7px; border-left: 1px solid #d8d8d8; background: linear-gradient(#d8d8d8, #d8d8d8) 0 50% / 100% 1px no-repeat; }
.tree .l3 b { width: 6px; height: 5px; margin-right: 3px; background: none; border: 1px solid #c58f90; border-left: 0; border-radius: 0 2px 2px 0; }
.tree .sel span { background: #0a1f6c; color: #dfe6ff; }
.vscroll { flex: none; width: 8px; display: flex; flex-direction: column; background: #f3f2ec; }
.vscroll button, .hscroll button { flex: none; width: 8px; height: 8px; background: #c4d5fb; }
.vscroll svg path, .hscroll svg path { fill: none; stroke: #4a62a4; stroke-width: 1.5; }
.vscroll i { height: 153px; margin-bottom: auto; background: #bdd0fb; border: 1px solid #a9c0f4; }
.hscroll { display: flex; justify-content: space-between; height: 8px; background: #f3f2ec; }
.treepane .hscroll { margin-right: 8px; }
.hscroll i { flex: 0 0 40px; background: #bdd0fb; border: 1px solid #a9c0f4; }
.treepane .hscroll i { margin-right: auto; margin-left: 1px; }
.infopane { flex: 1; margin: 0 0 5px 1px; border-left: 1px solid #777; border-top: 1px solid #777; display: flex; flex-direction: column; background: #fff; }
.info { display: grid; grid-template-rows: repeat(21, 1fr); height: 120px; margin-bottom: auto; white-space: nowrap; }
.info p { margin: 0; }
.info .in { padding-left: 3px; }
.info em { color: #f0b020; font-style: normal; }
.infopane .hscroll i { flex: 1; }
```
